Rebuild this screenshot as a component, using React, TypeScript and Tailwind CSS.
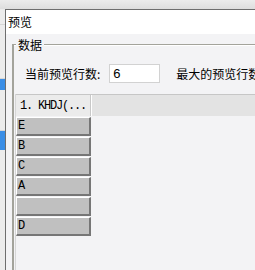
import React from 'react';

const rows = ['E', 'B', 'C', 'A', '', 'D'];

const GridRow: React.FC<{ label: string }> = ({ label }) => (
  <div className="w-[75px] h-[19px] mb-[1px] bg-[#c0c0c0] border-t border-l border-white border-b-2 border-r-2 border-b-[#767676] border-r-[#767676] flex items-center pl-[1px] font-['Liberation_Mono',monospace] text-[12px] text-black leading-none">
    {label}
  </div>
);

export default function App() {
  return (
    <div className="w-[255px] h-[270px] overflow-hidden bg-[#f0f0f0] flex flex-col font-['Noto_Sans_CJK_SC',sans-serif] text-[12px] text-black">
      {/* strip of the window behind */}
      <div className="h-[9px] shrink-0 bg-gradient-to-b from-[#ececec] to-[#dedede]" />
      <div className="flex flex-1 min-h-0">
        <div className="w-[5px] shrink-0 flex flex-col bg-[#ececec]">
          <div className="h-[16px] border-b border-[#d6d6d6]" />
          <div className="h-[54px] border-b border-[#d6d6d6]" />
          <div className="h-[11px] bg-[#3a8ee6]" />
          <div className="h-[41px] border-b border-[#d6d6d6]" />
          <div className="h-[19px] bg-[#3a8ee6]" />
          <div className="flex-1" />
        </div>

        {/* dialog */}
        <div className="flex-1 flex flex-col border-t border-l border-[#6e6e6e] bg-[#f3f3f5] min-w-0">
          <div className="h-[24px] shrink-0 bg-white flex items-center pl-[2px] leading-none">预览</div>

          <div className="flex-1 pl-[6px] pt-[10px]">
            <div className="relative h-full border-t-2 border-l-2 border-t-[#a3a39b] border-l-[#a3a39b]">
              <div className="absolute -top-[1px] left-0 w-full h-[1px] bg-white" />
              <span className="absolute -top-[9px] left-[2px] px-[2px] bg-[#f3f3f5] leading-[16px]">数据</span>

              <div className="flex items-center pt-[17px] pl-[11px] h-[38px] whitespace-nowrap">
                <span className="shrink-0 leading-none">当前预览行数:</span>
                <div className="shrink-0 ml-[9px] w-[51px] h-[19px] bg-white border border-[#d2d2d2] flex items-center pl-[3px] font-['Liberation_Sans',sans-serif] text-[13px] leading-none">6</div>
                <span className="shrink-0 ml-[16px] leading-none">最大的预览行数:</span>
              </div>

              <div className="mt-[10px] ml-[1px] h-full border-l border-[#d6d6d6]">
                <div className="h-[22px] border-t border-[#c6c6c6] bg-[#e3e3e3] flex">
                  <div className="w-[74px] bg-[#ebebeb] flex items-center pl-[4px] font-['Liberation_Mono',monospace] text-[12px] tracking-[-1.2px] leading-none whitespace-pre">1. KHDJ(...</div>
                  <div className="w-[1px] bg-[#c8c8c8]" />
                  <div className="w-[1px] bg-white" />
                </div>
                <div className="pt-[1px]">
                  {rows.map((r, i) => (
                    <GridRow key={i} label={r} />
                  ))}
                </div>
              </div>
            </div>
          </div>
        </div>
      </div>
    </div>
  );
}
